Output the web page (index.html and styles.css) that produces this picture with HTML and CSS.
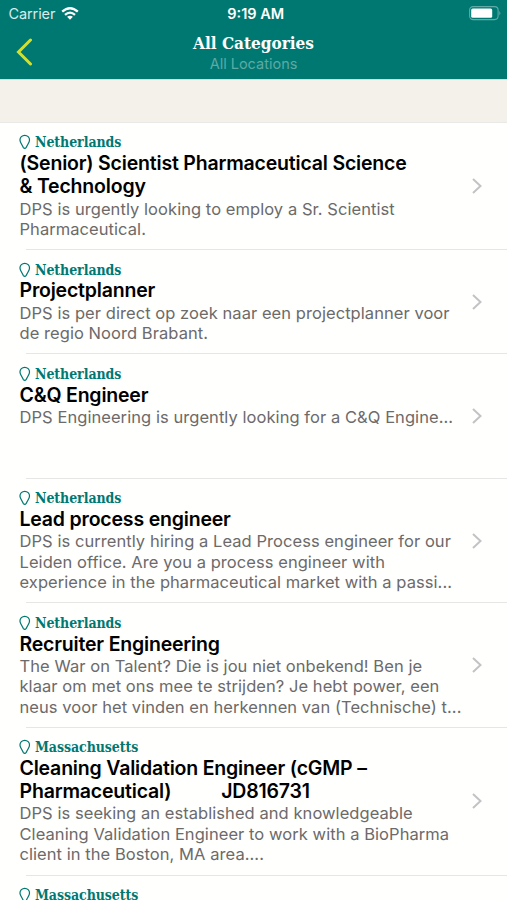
FILE: index.html
```html
<!DOCTYPE html>
<html lang="en">
  <head>
    <meta charset="UTF-8" />
    <meta name="viewport" content="width=device-width, initial-scale=1.0" />
    <title>All Categories</title>
    <link rel="stylesheet" href="styles.css">
  </head>
  <body>
    <svg class="sprite">
      <symbol id="pin" viewBox="0 0 12 16">
        <path d="M6 1C3.2 1 1 3.2 1 5.9C1 8.5 3 10.3 4.4 13.6Q6 15.6 7.6 13.6C9 10.3 11 8.5 11 5.9C11 3.2 8.8 1 6 1Z" />
      </symbol>
      <symbol id="chevron" viewBox="0 0 10 16">
        <path d="M1 1L8.5 8L1 15" />
      </symbol>
    </svg>

    <header>
      <div class="status-bar">
        <div class="carrier">
          <span>Carrier</span>
          <svg class="wifi" viewBox="0 0 18 13">
            <path d="M1.2 4.7Q9-2.3 16.8 4.7M4 7.8Q9 3.4 14 7.8" />
            <path class="dot" d="M6.1 9.8Q9 7.5 11.9 9.8L9 12.7Z" />
          </svg>
        </div>
        <span class="time">9:19 AM</span>
        <svg class="battery" viewBox="0 0 32 15">
          <rect class="case" x="0.6" y="0.6" width="28.5" height="13" rx="3.5" />
          <rect class="level" x="2.2" y="2.4" width="21" height="9.4" rx="1.5" />
          <path class="tip" d="M30.3 5Q32.3 7.2 30.3 9.4Z" />
        </svg>
      </div>
      <nav>
        <a class="back" href="#" aria-label="Back">
          <svg viewBox="0 0 17 28"><path d="M14.5 2L2.5 14L14.5 26" /></svg>
        </a>
        <div class="heading">
          <h1>All Categories</h1>
          <p>All Locations</p>
        </div>
      </nav>
    </header>

    <div class="section-gap"></div>

    <ul class="jobs">
      <li class="job">
        <div class="job-text">
          <div class="location"><svg><use href="#pin" /></svg><span>Netherlands</span></div>
          <h2>(Senior) Scientist Pharmaceutical Science<br />&amp; Technology</h2>
          <p>DPS is urgently looking to employ a Sr. Scientist<br />Pharmaceutical.</p>
        </div>
        <svg class="chevron"><use href="#chevron" /></svg>
      </li>
      <li class="job">
        <div class="job-text">
          <div class="location"><svg><use href="#pin" /></svg><span>Netherlands</span></div>
          <h2>Projectplanner</h2>
          <p>DPS is per direct op zoek naar een projectplanner voor<br />de regio Noord Brabant.</p>
        </div>
        <svg class="chevron"><use href="#chevron" /></svg>
      </li>
      <li class="job">
        <div class="job-text">
          <div class="location"><svg><use href="#pin" /></svg><span>Netherlands</span></div>
          <h2>C&amp;Q Engineer</h2>
          <p class="three-lines">DPS Engineering is urgently looking for a C&amp;Q Engine...</p>
        </div>
        <svg class="chevron"><use href="#chevron" /></svg>
      </li>
      <li class="job">
        <div class="job-text">
          <div class="location"><svg><use href="#pin" /></svg><span>Netherlands</span></div>
          <h2>Lead process engineer</h2>
          <p>DPS is currently hiring a Lead Process engineer for our<br />Leiden office. Are you a process engineer with<br />experience in the pharmaceutical market with a passi...</p>
        </div>
        <svg class="chevron"><use href="#chevron" /></svg>
      </li>
      <li class="job">
        <div class="job-text">
          <div class="location"><svg><use href="#pin" /></svg><span>Netherlands</span></div>
          <h2>Recruiter Engineering</h2>
          <p>The War on Talent? Die is jou niet onbekend! Ben je<br />klaar om met ons mee te strijden? Je hebt power, een<br />neus voor het vinden en herkennen van (Technische) t...</p>
        </div>
        <svg class="chevron"><use href="#chevron" /></svg>
      </li>
      <li class="job">
        <div class="job-text">
          <div class="location"><svg><use href="#pin" /></svg><span>Massachusetts</span></div>
          <h2>Cleaning Validation Engineer (cGMP –<br />Pharmaceutical)<span class="job-code">JD816731</span></h2>
          <p>DPS is seeking an established and knowledgeable<br />Cleaning Validation Engineer to work with a BioPharma<br />client in the Boston, MA area....</p>
        </div>
        <svg class="chevron"><use href="#chevron" /></svg>
      </li>
      <li class="job">
        <div class="job-text">
          <div class="location"><svg><use href="#pin" /></svg><span>Massachusetts</span></div>
        </div>
      </li>
    </ul>
  </body>
</html>
```
FILE: styles.css
```css
:root {
  --primary-color: #007872;
  --accent-color: #d2e02c;
  --line-color: #e6e6e6;
  --text-color: #6c6a6a;
}

* {
  box-sizing: border-box;
  margin: 0;
  padding: 0;
}

body {
  height: 900px;
  overflow: hidden;
  font-family: Inter, sans-serif;
  color: var(--text-color);
  background-color: #fffffe;
}

svg {
  display: block;
  fill: none;
  flex-shrink: 0;
}

.sprite {
  width: 0;
  height: 0;
  position: absolute;
}

header {
  height: 79px;
  background-color: var(--primary-color);
  color: white;
}

.status-bar {
  display: grid;
  grid-template-columns: 1fr auto 1fr;
  align-items: center;
  height: 27px;
  padding: 0 6px 0 8.5px;
  font-size: 14.5px;
}

.carrier {
  display: flex;
  align-items: center;
  gap: 6px;
  color: #d9ebea;
  letter-spacing: -0.1px;
}

.wifi {
  width: 18px;
  height: 13px;
  stroke: white;
  stroke-width: 2.3;
}

.wifi .dot {
  fill: white;
  stroke: none;
}

.time {
  padding-left: 2px;
  font-weight: 600;
  font-size: 14.5px;
}

.battery {
  width: 32px;
  height: 15px;
  justify-self: end;
}

.battery .case {
  stroke: #62aaa6;
  stroke-width: 1.1;
}

.battery .level {
  fill: white;
}

.battery .tip {
  fill: #62aaa6;
}

nav {
  display: grid;
  grid-template-columns: 48px 1fr 48px;
  height: 52px;
}

.back {
  padding: 11px 0 0 16px;
}

.back svg {
  width: 17px;
  height: 28px;
  stroke: var(--accent-color);
  stroke-width: 3;
  stroke-linecap: round;
}

.heading {
  text-align: center;
  white-space: nowrap;
  padding-top: 5px;
}

h1,
.location {
  font-family: "DejaVu Serif Condensed", "DejaVu Serif", serif;
  font-stretch: condensed;
  font-weight: bold;
}

h1 {
  font-size: 17px;
  line-height: 22px;
}

.heading p {
  font-size: 14.5px;
  line-height: 19px;
  color: #5caaa5;
}

.section-gap {
  height: 44px;
  background-color: #f4f1ea;
  border-top: 1px solid #c9e2de;
  border-bottom: 1px solid #e9e9e7;
}

.jobs {
  list-style: none;
}

.job {
  display: flex;
  align-items: center;
  justify-content: space-between;
  padding: 9.8px 25px 10.9px 19.5px;
  white-space: nowrap;
  background: linear-gradient(var(--line-color), var(--line-color)) 26px 100% / 100% 1px no-repeat;
}

.location {
  display: flex;
  align-items: center;
  gap: 4px;
  height: 19.4px;
  font-size: 14px;
  letter-spacing: -0.08px;
  color: var(--primary-color);
}

.location svg {
  width: 11.5px;
  height: 16px;
  margin-left: -0.5px;
  margin-right: 0.5px;
  stroke: var(--primary-color);
  stroke-width: 1.3;
}

h2 {
  font-size: 19.5px;
  font-weight: 600;
  line-height: 23.2px;
  letter-spacing: -0.19px;
  color: #000;
}

.job-code {
  margin-left: 50px;
}

.job p {
  font-size: 16.5px;
  line-height: 20.4px;
  letter-spacing: 0.06px;
}

.job .three-lines {
  min-height: 61.2px;
}

.chevron {
  width: 10px;
  height: 16px;
  stroke: #c3c3c5;
  stroke-width: 2;
}
```
